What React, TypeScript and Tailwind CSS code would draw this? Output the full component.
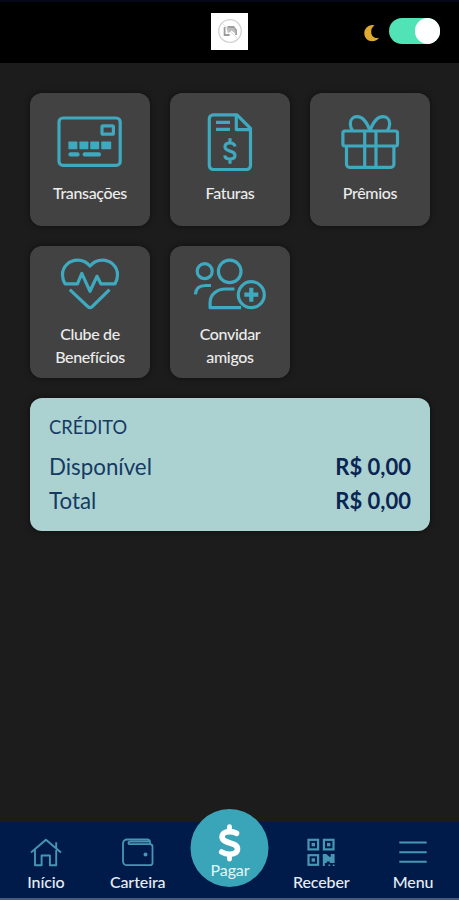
import { useState } from "react";
import type { ReactNode } from "react";

function TileIcon({ height, children }: { height: number; children: ReactNode }) {
  return (
    <svg
      width="120"
      height={height}
      viewBox={`0 0 120 ${height}`}
      fill="none"
      stroke="#3ea9bf"
      strokeWidth="3.2"
      strokeLinejoin="round"
      className="block shrink-0"
      aria-hidden
    >
      {children}
    </svg>
  );
}

function CardIcon() {
  return (
    <TileIcon height={88}>
      <rect x="29" y="25" width="61.2" height="47.4" rx="4" />
      <rect x="72" y="32.8" width="11.4" height="8.4" rx="1" />
      <g fill="#3ea9bf" stroke="none">
        <rect x="38.4" y="48.4" width="9" height="7.8" rx="0.8" />
        <rect x="49.4" y="48.4" width="9" height="7.8" rx="0.8" />
        <rect x="60.2" y="48.4" width="9" height="7.8" rx="0.8" />
        <rect x="71.2" y="48.4" width="10" height="7.8" rx="0.8" />
        <rect x="38.4" y="59.2" width="11.2" height="4.4" rx="2" />
        <rect x="52.6" y="59.2" width="18.4" height="4.4" rx="2" />
      </g>
    </TileIcon>
  );
}

function InvoiceIcon() {
  return (
    <TileIcon height={88}>
      <path d="M67 21.8H43.3a4 4 0 0 0-4 4v46.7a4 4 0 0 0 4 4h33.2a4 4 0 0 0 4-4V35.3z" />
      <path d="M66.3 22v14.6h14" />
      <path d="M46 29.4h14M46 36.4h14" />
      <path d="M65 53.6c-.4-2.5-2.3-3.6-5-3.6-3 0-5 1.4-5 3.8 0 5.7 10 2.9 10 8.5 0 2.4-2.1 3.7-5 3.7s-5-1.3-5.2-3.7M60 45.3v4M60 66.5v4.2" />
    </TileIcon>
  );
}

function GiftIcon() {
  return (
    <TileIcon height={88}>
      <rect x="32.9" y="38" width="54.6" height="15" rx="2" />
      <path d="M36.5 53v18.3a3 3 0 0 0 3 3h41.4a3 3 0 0 0 3-3V53" />
      <path d="M54.7 38v36.3M66 38v36.3" />
      <path d="M60 37.5C57 29.5 52.5 23.7 47.2 23.7c-4 0-6.900 3-6.900 7 0 3 .9 5 2.300 7" />
      <path d="M60 37.5C63 29.5 67.5 23.7 72.8 23.7c4 0 6.900 3 6.900 7 0 3-.9 5-2.300 7" />
    </TileIcon>
  );
}

function HeartIcon() {
  return (
    <TileIcon height={76}>
      <path d="M60 20C56.5 16.2 52.5 14.2 47.8 14.2c-8.6 0-15.3 6.300-15.300 14.600 0 3.500.9 6.300 2.400 9h12.600l4.300-10.400L60 45.300l7-15 3.800 7.500h14.300c1.500-2.700 2.400-5.500 2.400-9 0-8.300-6.700-14.600-15.300-14.600-4.700 0-8.700 2-12.200 5.800z" />
      <path d="M39.8 43.6l17.900 16.900c1.500 1.400 3.100 1.400 4.600 0l17.200-16.900" />
    </TileIcon>
  );
}

function FriendsIcon() {
  return (
    <TileIcon height={76}>
      <circle cx="34.7" cy="25.2" r="7.5" />
      <circle cx="59.7" cy="25.4" r="11.3" />
      <path d="M41 39.5h-5.5c-6 0-9.700 3-10.100 8.800" />
      <path d="M64.5 43H55.5c-8.5 0-15.400 5.500-15.400 13.500v5.200h31" />
      <circle cx="81.3" cy="48.7" r="13" />
      <path d="M81.3 41.7v14M74.3 48.7h14" strokeWidth="4.2" />
    </TileIcon>
  );
}

function HomeIcon() {
  return (
    <svg width="32" height="30" viewBox="0 0 32 30" fill="none" stroke="#4796b4" strokeWidth="1.9" strokeLinejoin="round" aria-hidden>
      <path d="M1 14.5L15.9 1.7 31 14.5M26.2 10.400V4.200" />
      <path d="M5 12v15.2h6.600v-9.700h8.300v9.700h6.300V12" />
    </svg>
  );
}

function WalletIcon() {
  return (
    <svg width="32" height="30" viewBox="0 0 32 30" fill="none" stroke="#4796b4" strokeWidth="1.8" strokeLinejoin="round" aria-hidden>
      <path d="M28 6.2V4a2.500 2.500 0 0 0-2.500-2.500H5a4 4 0 0 0-4 4v17.700a4 4 0 0 0 4 4h23a2.500 2.500 0 0 0 2.500-2.500V8.700a2.500 2.500 0 0 0-2.500-2.500H8.500c-1.400 0-2-.6-2-1.300s.6-1.200 1.500-1.200h19" />
      <circle cx="23.5" cy="16.5" r="2" fill="#4796b4" stroke="none" />
    </svg>
  );
}

function QrIcon() {
  return (
    <svg width="28" height="30" viewBox="0 0 28 30" fill="none" stroke="#4796b4" strokeWidth="2.2" aria-hidden>
      <rect x="1.5" y="1.8" width="9.6" height="9.6" />
      <rect x="16.9" y="1.8" width="9.6" height="9.6" />
      <rect x="1.5" y="17.2" width="9.6" height="9.6" />
      <g fill="#4796b4" stroke="none">
        <rect x="4.6" y="4.9" width="3.4" height="3.4" />
        <rect x="20" y="4.9" width="3.4" height="3.4" />
        <rect x="4.6" y="20.3" width="3.4" height="3.4" />
        <path d="M15.8 16h3.5l3 2.8h1.5V16h3.8v9h-4.800v-1.500h-3V25h-4z" />
        <path d="M15.8 25h2v3h-2zM21.500 26.500h1.700v1.500h-1.700zM25.800 26.500h1.700v1.500h-1.700z" />
      </g>
    </svg>
  );
}

function MenuIcon() {
  return (
    <svg width="28" height="30" viewBox="0 0 28 30" stroke="#4796b4" strokeWidth="2" aria-hidden>
      <path d="M.3 4.5h27.4M.3 14.2h27.4M.3 23.7h27.4" />
    </svg>
  );
}

function PayIcon() {
  return (
    <svg width="24" height="38" viewBox="0 0 24 38" fill="none" stroke="#fff" strokeWidth="5.6" strokeLinecap="round" className="shrink-0" aria-hidden>
      <path d="M19 9.300C17 8.200 14.500 7.600 12 7.600c-4.400 0-7.400 1.900-7.400 5.200 0 7.700 15.400 4.600 15.400 12 0 3.600-3.300 5.400-7.800 5.400-3 0-5.800-.8-8-2.200" />
      <path d="M12 2.600v4M12 31v4.200" strokeWidth="4.8" />
    </svg>
  );
}

function Tile({ icon, children }: { icon: ReactNode; children: ReactNode }) {
  return (
    <button
      type="button"
      className="flex h-[132.5px] flex-col items-center rounded-xl bg-[#424242] text-[16px] leading-[23px] font-medium tracking-[-0.35px] text-[#ececec] shadow-[0_0_6px_rgba(0,0,0,0.45)]"
    >
      {icon}
      <span>{children}</span>
    </button>
  );
}

function NavItem({ icon, label }: { icon: ReactNode; label: string }) {
  return (
    <button
      type="button"
      className="flex flex-col items-center pt-4 text-[16px] leading-5 font-medium tracking-[-0.1px] text-[#e6edf5]"
    >
      {icon}
      <span className="mt-1">{label}</span>
    </button>
  );
}

export default function App() {
  const [dark, setDark] = useState(true);

  return (
    <div className="flex h-[900px] w-full flex-col overflow-hidden bg-[#1c1c1c] font-['Lato',sans-serif]">
      <header className="grid h-[63px] shrink-0 grid-cols-3 items-center border-t-2 border-[#07071a] bg-black pb-[3px]">
        <div className="col-start-2 flex h-[37px] w-[37px] items-center justify-center justify-self-center bg-white">
          <svg width="26" height="26" viewBox="0 0 26 26" fill="none" aria-hidden>
            <circle cx="13" cy="13" r="11.3" stroke="#d3d3d3" strokeWidth="1.3" />
            <path d="M5 5l16 16" stroke="#e2e2e2" strokeWidth="1" />
            <path d="M7.6 9v8h5M10.5 9h6l2.500 3v5" stroke="#9b9b9b" strokeWidth="1.8" />
            <path d="M9.5 9.5l8 .5 1.500 6-4.500-3.500-3.500 3z" fill="#bdbdbd" />
          </svg>
        </div>
        <div className="flex items-center gap-[9px] justify-self-end pr-[19px]">
          <svg width="17" height="18" viewBox="0 0 17 18" className="mt-1" aria-hidden>
            <path
              d="M9.5 1C4.8 1.3 1.3 4.7 1.3 9.2c0 4.700 3.500 8 8 8 2.900 0 5.300-1.300 6.700-3.400-4 1.100-7.800-1.500-7.800-6.100 0-2.700.8-4.900 3.400-6.300z"
              fill="#e0a92f"
            />
          </svg>
          <button
            type="button"
            role="switch"
            aria-checked={dark}
            aria-label="Modo escuro"
            onClick={() => setDark(!dark)}
            className={`flex h-[26px] w-[51px] rounded-full bg-[#51e3b5] ${dark ? "justify-end" : "justify-start"}`}
          >
            <span className="h-[26px] w-[25px] rounded-full bg-white" />
          </button>
        </div>
      </header>

      <main className="flex-1 pt-[30px] pr-[29px] pl-[30px]">
        <div className="grid grid-cols-3 gap-5">
          <Tile icon={<CardIcon />}>Transações</Tile>
          <Tile icon={<InvoiceIcon />}>Faturas</Tile>
          <Tile icon={<GiftIcon />}>Prêmios</Tile>
          <Tile icon={<HeartIcon />}>
            Clube de
            <br />
            Benefícios
          </Tile>
          <Tile icon={<FriendsIcon />}>
            Convidar
            <br />
            amigos
          </Tile>
        </div>

        <section className="mt-5 h-[133px] rounded-xl bg-[#abd2d1] px-[19px] pt-[17px] text-[#153a63] shadow-[0_0_6px_rgba(0,0,0,0.55)]">
          <h2 className="text-[18.3px] leading-6">CRÉDITO</h2>
          <div className="mt-[11px] flex justify-between text-[22.3px] leading-[33.5px]">
            <span>Disponível</span>
            <b className="text-[22px] font-bold text-[#0a2553]">R$ 0,00</b>
          </div>
          <div className="flex justify-between text-[22.3px] leading-[33.5px]">
            <span>Total</span>
            <b className="text-[22px] font-bold text-[#0a2553]">R$ 0,00</b>
          </div>
        </section>
      </main>

      <nav className="grid h-[78px] shrink-0 grid-cols-5 border-b-2 border-[#4b5b7d] bg-[#001b4a]">
        <NavItem icon={<HomeIcon />} label="Início" />
        <NavItem icon={<WalletIcon />} label="Carteira" />
        <button
          type="button"
          className="-mt-[13px] flex h-[78px] w-[78px] translate-x-[0.5px] flex-col items-center justify-self-center rounded-full bg-[#3aa5b9] pt-[15px] text-[16px] leading-5 tracking-[-0.1px] text-[#e4f5f7]"
        >
          <PayIcon />
          <span className="-mt-[2px]">Pagar</span>
        </button>
        <NavItem icon={<QrIcon />} label="Receber" />
        <NavItem icon={<MenuIcon />} label="Menu" />
      </nav>
    </div>
  );
}
